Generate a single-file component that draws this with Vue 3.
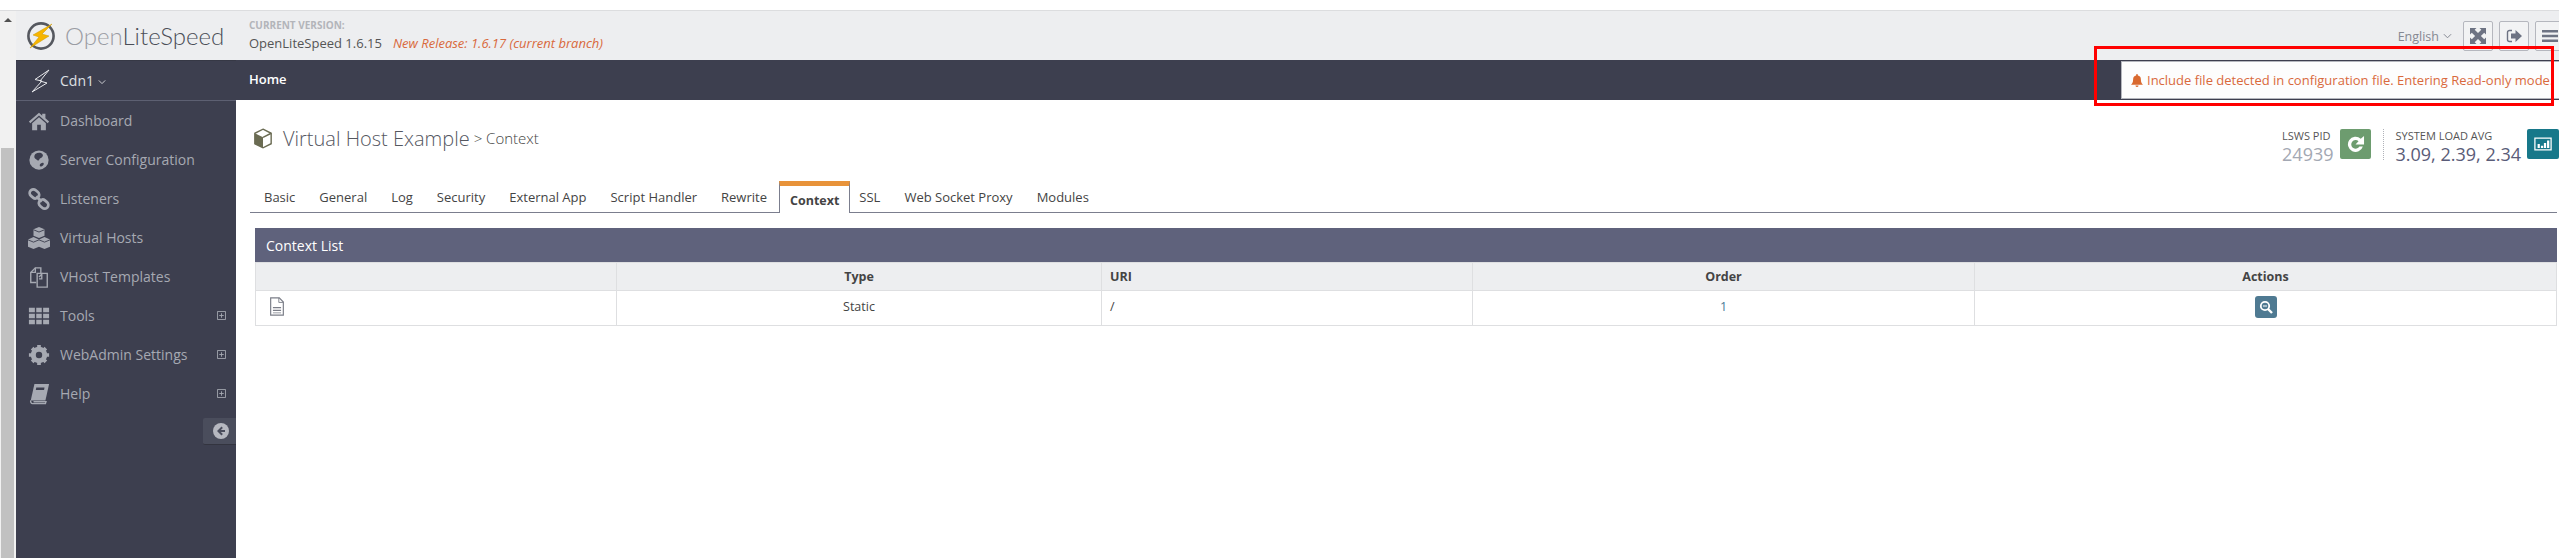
<template>
  <div class="page">
    <div class="frame">
      <div class="scrollbar">
        <span class="scroll-arrow" />
        <span class="scroll-thumb" />
      </div>

      <div class="app">
        <header class="top">
          <div class="logo">
            <svg class="logo-mark" viewBox="0 0 30 30">
              <circle cx="15" cy="15" r="12.6" fill="none" stroke="#55585f" stroke-width="2.6" />
              <path d="M26 3 7 14l6 2L4 27l19-12-7-2z" fill="#f7b500" stroke="#c99700" stroke-width=".5" />
            </svg>
            <span class="logo-text"><span class="logo-open">Open</span><span class="logo-lite">Lite</span><span class="logo-speed">Speed</span></span>
          </div>
          <div class="version">
            <div class="version-label">CURRENT VERSION:</div>
            <div class="version-line">
              <span>OpenLiteSpeed 1.6.15</span>
              <em>New Release: 1.6.17 (current branch)</em>
            </div>
          </div>
          <div class="top-tools">
            <span class="lang">English
              <svg viewBox="0 0 10 6" class="chev"><path d="M1 1l4 4 4-4" fill="none" stroke="currentColor" stroke-width="1.1" /></svg>
            </span>
            <button class="tool-btn" type="button">
              <svg viewBox="0 0 16 16"><path d="M0 0h6.500L4.700 1.800 8 5.100l3.300-3.300L9.500 0H16v6.500l-1.800-1.800L10.900 8l3.300 3.300 1.800-1.800V16H9.500l1.800-1.800L8 10.900l-3.300 3.300L6.500 16H0V9.500l1.800 1.800L5.100 8 1.800 4.700 0 6.500z" fill="#6d7383" /></svg>
            </button>
            <button class="tool-btn" type="button">
              <svg viewBox="0 0 16 16"><path d="M6 2.500H3.500A2 2 0 0 0 1.500 4.500v7a2 2 0 0 0 2 2H6" fill="none" stroke="#6d7383" stroke-width="1.400" /><path d="M5 5.500h4.500V2L16 8l-6.500 6v-3.500H5z" fill="#6d7383" /></svg>
            </button>
            <button class="tool-btn" type="button">
              <svg viewBox="0 0 16 16"><path d="M0 2h16v2.600H0zM0 6.700h16v2.600H0zM0 11.400h16V14H0z" fill="#6d7383" /></svg>
            </button>
          </div>
        </header>

        <div class="below">
          <aside class="sidebar">
            <div class="side-head">
              <svg class="side-bolt" viewBox="0 0 20 24"><path d="M18 1 4 10.500l7 1.500L1 23l15-9-7-2z" fill="none" stroke="#e8e9ec" stroke-width="1" stroke-linejoin="round" /></svg>
              <span class="side-name">Cdn1</span>
              <svg viewBox="0 0 10 6" class="chev side-chev"><path d="M1 1l4 4 4-4" fill="none" stroke="currentColor" stroke-width="1.100" /></svg>
            </div>
            <nav class="side-nav">
              <a v-for="item in navItems" :key="item.label" class="side-item">
                <svg class="side-icon" viewBox="0 0 24 24" v-html="item.icon" />
                <span class="side-label">{{ item.label }}</span>
                <span v-if="item.more" class="side-more">
                  <svg viewBox="0 0 10 10"><path d="M.5.500h9v9h-9zM2.500 5h5M5 2.500v5" fill="none" stroke="#a6a9b2" stroke-width="1" /></svg>
                </span>
              </a>
            </nav>
            <div class="side-collapse">
              <svg viewBox="0 0 16 16"><circle cx="8" cy="8" r="8" fill="#b6b8c0" /><path d="M8.500 3.500 4 8l4.500 4.500 1.400-1.400L7.800 9H12V7H7.800l2.100-2.100z" fill="#4a4d5c" /></svg>
            </div>
          </aside>

          <main class="main">
            <div class="crumbs">Home</div>
            <div class="content">
              <div class="title-row">
                <h1 class="page-title">
                  <svg class="title-cube" viewBox="0 0 16 18"><path d="M8 1 15 4.500v9L8 17l-7-3.500v-9z" fill="#fff" stroke="#6a6b52" stroke-width="1.200" /><path d="M1 4.500 8 8v9l-7-3.500z" fill="#6a6b52" /><path d="M8 8l7-3.500" stroke="#6a6b52" stroke-width="1.200" /></svg>
                  <span class="title-main">Virtual Host Example</span>
                  <span class="title-sub">&gt; Context</span>
                </h1>
                <div class="stats">
                  <div class="stat">
                    <span class="stat-label">LSWS PID</span>
                    <span class="stat-pid">24939</span>
                  </div>
                  <button class="stat-btn green" type="button">
                    <svg viewBox="0 0 16 16"><path d="M13.600 9.500A5.800 5.800 0 1 1 12 3.600L14.500 1.500V8H8l2.300-2.500A3.300 3.300 0 1 0 11 9.500z" fill="#fff" /></svg>
                  </button>
                  <span class="stat-divider" />
                  <div class="stat">
                    <span class="stat-label">SYSTEM LOAD AVG</span>
                    <span class="stat-load">3.09, 2.39, 2.34</span>
                  </div>
                  <button class="stat-btn teal" type="button">
                    <svg viewBox="0 0 20 16"><path d="M1 1.500h18v13H1z" fill="none" stroke="#fff" stroke-width="1.400" /><path d="M4 8h2.500v4.500H4zM7.700 10h2.500v2.500H7.700zM11 7h2.500v5.500H11zM14.500 4h2.500v8.500h-2.500z" fill="#fff" /></svg>
                  </button>
                </div>
              </div>

              <ul class="tabs">
                <li v-for="tab in tabs" :key="tab" class="tab" :class="{ active: tab === 'Context' }">{{ tab }}</li>
              </ul>

              <section class="panel">
                <div class="panel-head">Context List</div>
                <table class="list">
                  <colgroup>
                    <col style="width: 361px" />
                    <col style="width: 485px" />
                    <col style="width: 371px" />
                    <col style="width: 502px" />
                    <col />
                  </colgroup>
                  <thead>
                    <tr>
                      <th />
                      <th>Type</th>
                      <th class="left">URI</th>
                      <th>Order</th>
                      <th>Actions</th>
                    </tr>
                  </thead>
                  <tbody>
                    <tr>
                      <td class="left">
                        <svg class="file-icon" viewBox="0 0 16 21"><path d="M1 1h9.500L15 5.500V20H1z" fill="#fff" stroke="#7b7e88" stroke-width="1.300" /><path d="M10 1v5h5" fill="none" stroke="#7b7e88" /><path d="M3.500 11h9v1.500h-9zM3.500 14h9v1.500h-9zM3.500 17h9v1h-9z" fill="#7b7e88" /></svg>
                      </td>
                      <td>Static</td>
                      <td class="left">/</td>
                      <td class="order">1</td>
                      <td>
                        <button class="view-btn" type="button">
                          <svg viewBox="0 0 14 14"><circle cx="6" cy="6" r="4.200" fill="none" stroke="#fff" stroke-width="1.800" /><path d="M9 9 13 13" stroke="#fff" stroke-width="2.400" /><path d="M4 6h4" stroke="#fff" /></svg>
                        </button>
                      </td>
                    </tr>
                  </tbody>
                </table>
              </section>
            </div>
          </main>
        </div>
      </div>
    </div>

    <div class="notice">
      <svg class="bell" viewBox="0 0 14 15"><path d="M7 0a1 1 0 0 1 1 1v.600A4.500 4.500 0 0 1 11.500 6c0 4 1.500 5.500 2.500 6.500H0C1 11.500 2.500 10 2.500 6A4.500 4.500 0 0 1 6 1.600V1a1 1 0 0 1 1-1zM5.200 13.300h3.600a1.800 1.800 0 0 1-3.600 0z" fill="#d9692f" /></svg>
      <span>Include file detected in configuration file. Entering Read-only mode.</span>
    </div>
    <div class="red-box" />
  </div>
</template>

<script setup>
const navItems = [
  {
    label: "Dashboard",
    icon: '<path d="M12 3 1 12.500 2.500 14.500 12 6l9.500 8.500 1.500-2L19 9V4h-3.500v2.200z" fill="#a6a9b2"/><path d="M12 8 4.500 14.500V22h5.500v-6h4v6h5.500v-7.500z" fill="#a6a9b2"/>',
  },
  {
    label: "Server Configuration",
    icon: '<circle cx="12" cy="12" r="10.500" fill="#a6a9b2"/><path d="M8 5.500c3-2 7-1.500 8 .5s-1 3.500-2.500 4-1 3-2.500 2.500S9.500 11 8 10.500 6.500 7 8 5.500zM13 17c1-1.500 3-2.500 4-1.500s-1 3-2.500 3.500-2-.8-1.500-2z" fill="#3d3f4f"/>',
  },
  {
    label: "Listeners",
    icon: '<g fill="none" stroke="#a6a9b2" stroke-width="3"><rect x="1.500" y="2.500" width="11" height="8" rx="4" transform="rotate(40 7 6.500)"/><rect x="11.500" y="13.500" width="11" height="8" rx="4" transform="rotate(40 17 17.500)"/><path d="M9 9l6 6"/></g>',
  },
  {
    label: "Virtual Hosts",
    icon: '<g fill="#a6a9b2"><path d="M12 0l6 2.500v7L12 12 6 9.500v-7z"/><path d="M6 11l6 2.500v8L6 24 0 21.500v-8z"/><path d="M18 11l6 2.500v8L18 24l-6-2.500v-8z"/></g><path d="M6 3l6 2.500L18 3M0 14l6 2.500 6-2.500M12 14l6 2.500 6-2.500" fill="none" stroke="#3d3f4f"/>',
  },
  {
    label: "VHost Templates",
    icon: '<g fill="none" stroke="#a6a9b2" stroke-width="1.500"><path d="M9 18H3V7l5-5h6v6"/><path d="M10 8h6l5 0v15H10z"/><path d="M8 2v5H3M12 12l3-3v5h-3"/></g>',
  },
  {
    label: "Tools",
    more: true,
    icon: '<path d="M1 3h6.500v5H1zM9 3h6v5H9zM16.500 3H23v5h-6.500zM1 9.500h6.500v5H1zM9 9.500h6v5H9zM16.500 9.500H23v5h-6.500zM1 16h6.500v5H1zM9 16h6v5H9zM16.500 16H23v5h-6.500z" fill="#a6a9b2"/>',
  },
  {
    label: "WebAdmin Settings",
    more: true,
    icon: '<g stroke="#a6a9b2" stroke-width="4"><path d="M12 1v22M1 12h22M4.500 4.500l15 15M19.500 4.500l-15 15"/></g><circle cx="12" cy="12" r="6.500" fill="none" stroke="#a6a9b2" stroke-width="5"/><circle cx="12" cy="12" r="3.500" fill="#3d3f4f"/>',
  },
  {
    label: "Help",
    more: true,
    icon: '<path d="M7 1h16l-4 18H3z" fill="#a6a9b2"/><path d="M3 19c-.5 2 .5 3.500 2 3.500h14l.6-2H6" fill="none" stroke="#a6a9b2" stroke-width="1.500"/><path d="M9 5h9l-.5 2.500h-9z" fill="#3d3f4f"/>',
  },
];

const tabs = [
  "Basic",
  "General",
  "Log",
  "Security",
  "External App",
  "Script Handler",
  "Rewrite",
  "Context",
  "SSL",
  "Web Socket Proxy",
  "Modules",
];
</script>

<style>
html,
body {
  margin: 0;
  background: #fff;
  overflow: hidden;
}
</style>

<style scoped>
.page {
  position: relative;
  width: 2559px;
  height: 558px;
  padding-top: 10px;
  box-sizing: border-box;
  overflow: hidden;
  font-family: "Open Sans", sans-serif;
  font-size: 12px;
  color: #444;
  background: #fff;
}

.frame {
  display: flex;
  height: 548px;
  border-top: 1px solid #dcdddf;
  box-sizing: border-box;
}

.scrollbar {
  position: relative;
  flex: 0 0 16px;
  background: #f1f1f1;
}

.scroll-arrow {
  position: absolute;
  left: 4px;
  top: 7px;
  border: 4px solid transparent;
  border-top: 0;
  border-bottom: 4px solid #505050;
}

.scroll-thumb {
  position: absolute;
  left: 1px;
  width: 13px;
  top: 137px;
  bottom: 0;
  background: #c1c1c1;
}

.app {
  flex: 1;
  min-width: 0;
  display: flex;
  flex-direction: column;
}

.top {
  display: flex;
  align-items: stretch;
  height: 49px;
  background: #edeef0;
  flex: none;
}

.logo {
  flex: 0 0 220px;
  display: flex;
  align-items: center;
  padding: 1px 0 0 10px;
  box-sizing: border-box;
  gap: 9px;
}

.logo-mark {
  width: 30px;
  height: 30px;
  flex: none;
}

.logo-text {
  font-family: Lato, sans-serif;
  font-size: 24px;
  font-weight: 300;
  line-height: 1;
  white-space: nowrap;
}

.logo-open {
  color: #9a9ca3;
}

.logo-lite,
.logo-speed {
  color: #4b4e58;
}

.version {
  padding: 7px 0 0 13px;
}

.version-label {
  font-size: 10px;
  font-weight: 700;
  line-height: 14px;
  color: #b3b5ba;
}

.version-line {
  display: flex;
  gap: 11px;
  font-size: 13px;
  line-height: 20px;
  margin-top: 1px;
  color: #555;
  white-space: nowrap;
}

.version-line em {
  color: #d9693c;
}

.top-tools {
  margin-left: auto;
  display: flex;
  align-items: flex-start;
  gap: 6px;
  padding-top: 10px;
  margin-right: -6px;
}

.lang {
  display: flex;
  align-items: center;
  gap: 4px;
  height: 30px;
  margin-right: 5px;
  font-size: 12.500px;
  color: #858892;
}

.chev {
  width: 9px;
  height: 6px;
}

.tool-btn {
  width: 30px;
  height: 30px;
  padding: 0;
  display: grid;
  place-items: center;
  background: #f2f3f4;
  border: 1px solid #b5b7be;
  border-radius: 2px;
}

.tool-btn svg {
  width: 16px;
  height: 16px;
}

.below {
  flex: 1;
  display: flex;
  min-height: 0;
}

.sidebar {
  position: relative;
  flex: 0 0 220px;
  background: #3d3f4f;
  color: #a6a9b2;
  border-top: 1px solid #363845;
  box-sizing: border-box;
}

.side-head {
  display: flex;
  align-items: center;
  height: 39px;
  padding-left: 15px;
  border-bottom: 1px solid #5d6072;
  color: #dfe0e4;
}

.side-bolt {
  width: 20px;
  height: 24px;
  flex: none;
}

.side-name {
  margin-left: 9px;
  font-size: 14px;
}

.side-chev {
  margin-left: 4px;
  margin-top: 3px;
  width: 8px;
}

.side-nav {
  display: flex;
  flex-direction: column;
}

.side-item {
  display: flex;
  align-items: center;
  height: 39px;
  padding-left: 12px;
  font-size: 14px;
  white-space: nowrap;
}

.side-icon {
  width: 22px;
  height: 22px;
  flex: none;
}

.side-label {
  margin-left: 10px;
}

.side-more {
  margin-left: auto;
  margin-right: 10px;
  display: flex;
}

.side-more svg {
  width: 9px;
  height: 9px;
}

.side-collapse {
  position: absolute;
  right: 0;
  top: 357px;
  width: 33px;
  height: 27px;
  display: flex;
  align-items: center;
  padding-left: 10px;
  box-sizing: border-box;
  background: #4a4d5c;
  border-bottom: 1px solid #33343f;
  border-radius: 2px 0 0 2px;
}

.side-collapse svg {
  width: 16px;
  height: 16px;
}

.main {
  flex: 1;
  min-width: 0;
  display: flex;
  flex-direction: column;
}

.crumbs {
  flex: none;
  height: 40px;
  padding: 0 0 0 13px;
  box-sizing: border-box;
  line-height: 39px;
  background: #3d3f4f;
  color: #fff;
  font-size: 13px;
  font-weight: 600;
}

.content {
  flex: 1;
  padding: 0 2px 0 14px;
}

.title-row {
  display: flex;
  justify-content: space-between;
  align-items: flex-start;
  height: 80px;
}

.page-title {
  display: flex;
  align-items: center;
  margin: 26px 0 0 3px;
  height: 24px;
  font-weight: 300;
  color: #55575f;
  white-space: nowrap;
}

.title-cube {
  width: 20px;
  height: 21px;
  margin-right: 10px;
}

.title-main {
  font-size: 20px;
}

.title-sub {
  margin-left: 4px;
  font-size: 15px;
  color: #444;
}

.stats {
  display: flex;
  align-items: flex-start;
  padding-top: 29px;
  margin-right: -2px;
}

.stat {
  display: flex;
  flex-direction: column;
}

.stat-label {
  font-size: 11px;
  line-height: 14px;
  color: #555;
}

.stat-pid,
.stat-load {
  font-size: 18px;
  line-height: 20px;
  margin-top: 1px;
}

.stat-pid {
  color: #a3a8b3;
}

.stat-load {
  color: #5a5c78;
}

.stat-btn {
  width: 31px;
  height: 30px;
  margin-left: 6px;
  padding: 0;
  display: grid;
  place-items: center;
  border: 0;
  border-radius: 2px;
}

.stat-btn svg {
  width: 18px;
  height: 18px;
}

.green svg {
  width: 21px;
  height: 21px;
}

.green {
  background: #6d9c6f;
}

.teal {
  width: 32px;
  background: #17788a;
}

.stat-divider {
  height: 31px;
  margin: 0 12px;
  border-left: 1px dotted #b0b2b8;
}

.tabs {
  display: flex;
  align-items: flex-end;
  height: 32px;
  margin: 0;
  padding: 0 0 0 2px;
  list-style: none;
  border-bottom: 1px solid #7b7e8e;
}

.tab {
  height: 30px;
  padding: 0 12px;
  line-height: 30px;
  font-size: 13px;
  color: #444;
  white-space: nowrap;
}

.tab.active {
  position: relative;
  top: 1px;
  height: 27px;
  padding: 0 10px;
  margin-right: -3px;
  line-height: 30px;
  font-size: 12.500px;
  font-weight: 700;
  background: #fff;
  border: 1px solid #7b7e8e;
  border-top: 5px solid #e8933a;
  border-bottom: 0;
}

.panel {
  margin: 15px 0 0 5px;
}

.panel-head {
  height: 34px;
  padding-left: 11px;
  line-height: 36px;
  background: #5f627c;
  color: #fff;
  font-size: 14px;
}

.list {
  width: 100%;
  border-collapse: collapse;
  table-layout: fixed;
  border: 1px solid #dedfe1;
  border-top: 0;
}

.list th,
.list td {
  border: 1px solid #dedfe1;
  text-align: center;
  font-size: 12.500px;
  padding: 0 8px;
}

.list th {
  height: 27px;
  background: #edeef0;
  color: #444;
  font-weight: 700;
}

.list td {
  height: 31px;
  padding-bottom: 3px;
  color: #444;
  vertical-align: middle;
}

.list .left {
  text-align: left;
}

.list td.order {
  color: #4a7a96;
}

.file-icon {
  display: block;
  width: 16px;
  height: 19px;
  margin: 0 0 0 5px;
}

.view-btn {
  display: inline-grid;
  place-items: center;
  vertical-align: middle;
  width: 22px;
  height: 22px;
  padding: 0;
  border: 0;
  border-radius: 3px;
  background: #4f7a92;
}

.view-btn svg {
  width: 14px;
  height: 14px;
}

.notice {
  position: absolute;
  left: 2121px;
  top: 61px;
  width: 460px;
  height: 38px;
  box-sizing: border-box;
  display: flex;
  align-items: center;
  gap: 4px;
  padding-left: 9px;
  background: #fdfdfd;
  border: 1px solid #b5b7be;
  font-size: 13px;
  color: #d9693c;
  white-space: nowrap;
}

.bell {
  width: 12px;
  height: 13px;
}

.red-box {
  position: absolute;
  left: 2094px;
  top: 46px;
  width: 460px;
  height: 60px;
  box-sizing: border-box;
  border: 3px solid #f00;
}
</style>
